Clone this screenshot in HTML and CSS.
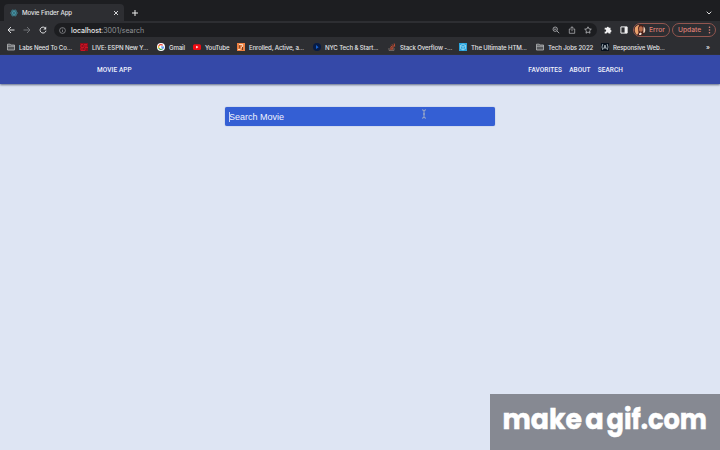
FILE: index.html
```html
<!DOCTYPE html>
<html lang="en">
<head>
<meta charset="utf-8">
<title>Movie Finder App</title>
<link rel="stylesheet" href="styles.css">
</head>
<body>
<div class="browser">
  <div class="tabs">
    <div class="tab">
      <svg class="react" viewBox="0 0 8 8"><g fill="none" stroke="#48a9bd" stroke-width=".6"><ellipse cx="4" cy="4" rx="3.5" ry="1.4"/><ellipse cx="4" cy="4" rx="3.5" ry="1.4" transform="rotate(60 4 4)"/><ellipse cx="4" cy="4" rx="3.5" ry="1.4" transform="rotate(120 4 4)"/></g><circle cx="4" cy="4" r=".8" fill="#48a9bd"/></svg>
      <span class="tab-title">Movie Finder App</span>
      <svg class="close" viewBox="0 0 6 6"><path d="M1 1l4 4M5 1L1 5" stroke="#e5e6e8" stroke-width=".9"/></svg>
    </div>
    <svg class="plus" viewBox="0 0 6 6"><path d="M3 0v6M0 3h6" stroke="#eee" stroke-width="1"/></svg>
    <svg class="chevron" viewBox="0 0 6 4"><path d="M.7.7L3 3 5.3.7" fill="none" stroke="#ddd" stroke-width="1"/></svg>
  </div>
  <div class="toolbar">
    <svg class="nav" viewBox="0 0 8 8"><path d="M7.5 4H1M4 1L1 4l3 3" fill="none" stroke="#dfe0e2"/></svg>
    <svg class="nav" viewBox="0 0 8 8"><path d="M.5 4H7M4 1l3 3-3 3" fill="none" stroke="#717377"/></svg>
    <svg class="nav" viewBox="0 0 8 8"><path d="M6.5 2.3A3 3 0 1 0 7 4.7" fill="none" stroke="#dfe0e2" stroke-width="1"/><path d="M7.2.6v3H4.3z" fill="#dfe0e2"/></svg>
    <div class="omnibox">
      <svg class="info" viewBox="0 0 7 7"><circle cx="3.5" cy="3.5" r="2.9" fill="none" stroke="#999b9f" stroke-width=".7"/><path d="M3.5 3v2M3.5 1.7v.7" stroke="#999b9f" stroke-width=".7"/></svg>
      <span class="url"><b>localhost</b>:3001/search</span>
      <svg class="tool" viewBox="0 0 8 8"><circle cx="3.2" cy="3.2" r="2.2" fill="none" stroke="#bbbdc0" stroke-width=".8"/><path d="M4.9 4.9l2.3 2.3M2.1 3.2h2.2" stroke="#bbbdc0" stroke-width=".8"/></svg>
      <svg class="tool" viewBox="0 0 8 8"><path d="M2.8 3H1.3v4.3h5.4V3H5.2M4 5.2V.8M2.5 2.2L4 .7l1.5 1.5" fill="none" stroke="#bbbdc0" stroke-width=".7"/></svg>
      <svg class="tool" viewBox="0 0 8 8"><path d="M4 .8l1 2.1 2.3.3-1.7 1.6.4 2.4-2-1.2-2 1.2.4-2.4L.7 3.2 3 2.9z" fill="none" stroke="#d0d1d4" stroke-width=".7"/></svg>
    </div>
    <svg class="puzzle" viewBox="0 0 8 8"><path d="M.7 1.8H2.8a1 1 0 1 1 2 0h1.7V4a1 1 0 1 1 0 2v1.6H4.6a1 1 0 1 0-2 0H.7V5.5a1 1 0 1 0 0-1.8z" fill="#f1f1f2"/></svg>
    <svg class="panel" viewBox="0 0 8 8"><path d="M.9.9h6.2v6.2H.9z" fill="none" stroke="#f1f1f2" stroke-width="1"/><path d="M4.6 1h2.6v6H4.6z" fill="#f1f1f2"/></svg>
    <div class="pill error">
      <svg class="avatar" viewBox="0 0 12 12"><circle cx="6" cy="6" r="5.6" fill="#4b2019"/><path d="M1.2 3.2Q3 .7 5.2.7L4 4l.5 5-1.5 2Q-.5 7.5 1.2 3.2" fill="#eba16c"/><ellipse cx="6.8" cy="5" rx="2" ry="2.8" fill="#b46b4b"/><path d="M9.6 2.3Q12.3 5.2 10.6 8.6L9.3 9z" fill="#f0d4bf"/><path d="M5.3 9.2l1.5-.7 1 1.2-1 1.2H5z" fill="#eee2d8"/></svg>
      <span>Error</span>
    </div>
    <div class="pill update"><span>Update</span><svg viewBox="0 0 3 8"><g fill="#e1857b"><circle cx="1.5" cy="1.2" r=".8"/><circle cx="1.5" cy="4" r=".8"/><circle cx="1.5" cy="6.8" r=".8"/></g></svg></div>
  </div>
  <div class="bookmarks">
    <div class="mark"><svg viewBox="0 0 8 8"><path d="M.5 1.2h2.7l.7.8h3.6v5H.5zM.5 3.2h7" fill="#55575b" stroke="#c4c5c7" stroke-width=".7"/></svg><span>Labs Need To Co...</span></div>
    <div class="mark"><svg viewBox="0 0 8 8"><path d="M0 0h8v8H0z" fill="#8c0e1c"/><path d="M1 1.5h2m1 0h3M0 3h2m1 0h4M1 4.5h3m1 0h3M0 6h3m1 0h2M1 7.5h4" stroke="#dc1627" stroke-width=".8"/></svg><span>LIVE: ESPN New Y...</span></div>
    <div class="mark"><svg viewBox="0 0 8 8"><circle cx="4" cy="4" r="4" fill="#fff"/><g fill="none" stroke-width="1.2"><path d="M5.7 2.3A2.4 2.4 0 0 0 1.8 3" stroke="#e64235"/><path d="M1.8 3a2.4 2.4 0 0 0 0 2" stroke="#f4b81c"/><path d="M1.8 5a2.4 2.4 0 0 0 3.7.9" stroke="#34a853"/><path d="M5.5 5.9A2.4 2.4 0 0 0 6.3 4H4" stroke="#4285f4"/></g></svg><span>Gmail</span></div>
    <div class="mark"><svg viewBox="0 0 8 8"><rect y="1.2" width="8" height="5.8" rx="1.5" fill="#f10b13"/><path d="M3.2 2.8v2.6l2.2-1.3z" fill="#fff"/></svg><span>YouTube</span></div>
    <div class="mark"><svg viewBox="0 0 8 8"><path d="M0 0h8v8H0z" fill="#ed8142"/><path d="M2 1.5h3.6v2L4 4.5v1M1 6.5h2.5" fill="none" stroke="#fff0dc" stroke-width=".8"/><path d="M2.7 2.3v3M5.5 4v3" stroke="#693419" stroke-width=".9"/></svg><span>Enrolled, Active, a...</span></div>
    <div class="mark"><svg viewBox="0 0 8 8"><circle cx="4" cy="4" r="4" fill="#071b44"/><path d="M3 2v4l2.6-1.8z" fill="#1763cf"/></svg><span>NYC Tech &amp; Start...</span></div>
    <div class="mark"><svg viewBox="0 0 8 8"><path d="M1 5v2.4h5V5" fill="none" stroke="#92837b" stroke-width=".7"/><path d="M2 6.1h3M2.1 4.7l3 .6M2.7 3l2.8 1.5M4.1 1.4l1.9 2.4M6.2.5l.5 3" stroke="#e95632" stroke-width=".8"/></svg><span>Stack Overflow -...</span></div>
    <div class="mark"><svg viewBox="0 0 8 8"><path d="M0 0h8v8H0z" fill="#29a3dc"/><path d="M4 1l2.5 1.5v3L4 7 1.5 5.5v-3zM1.5 2.5L4 4l2.5-1.5M4 4v3" fill="none" stroke="#bce8f6" stroke-width=".6"/></svg><span>The Ultimate HTM...</span></div>
    <div class="mark"><svg viewBox="0 0 8 8"><path d="M.5 1.2h2.7l.7.8h3.6v5H.5zM.5 3.2h7" fill="#55575b" stroke="#c4c5c7" stroke-width=".7"/></svg><span>Tech Jobs 2022</span></div>
    <div class="mark"><svg viewBox="0 0 8 8"><path d="M0 0h8v8H0z" fill="#07111d"/><path d="M1.8 1Q.2 4 1.8 7M6.2 1Q7.8 4 6.2 7M2.6 6L4 2l1.4 4M3 4.8h2" fill="none" stroke="#d1dce2" stroke-width=".7"/></svg><span>Responsive Web...</span></div>
    <span class="more">»</span>
  </div>
</div>
<header class="app-bar">
  <a class="brand">MOVIE APP</a>
  <nav class="links"><a>FAVORITES</a><a>ABOUT</a><a>SEARCH</a></nav>
</header>
<main class="page">
  <div class="search"><span class="placeholder">Search Movie</span><i class="caret"></i>
    <svg class="cursor" viewBox="0 0 6 10"><path d="M1 .8q2 0 2 1.4v5.6q0 1.4-2 1.4M5 .8q-2 0-2 1.4M5 9.2q-2 0-2-1.4M2 5h2" fill="none" stroke="#a9b3c5" stroke-width=".9"/></svg>
  </div>
</main>
<div class="watermark"><svg viewBox="0 0 230 56"><g class="wm"><text x="12.5" y="35.3" textLength="79.5" lengthAdjust="spacingAndGlyphs">make</text><text x="95.2" y="35.3" textLength="18.5" lengthAdjust="spacingAndGlyphs">a</text><text x="116.5" y="35.3" textLength="100.5" lengthAdjust="spacingAndGlyphs">gif.com</text></g></svg></div>
</body>
</html>
```
FILE: styles.css
```css
* { box-sizing: border-box; }
body { margin: 0; width: 720px; height: 450px; overflow: hidden; background: #dee5f3; font-family: Inter, "Liberation Sans", sans-serif; }
svg { display: block; flex: none; overflow: visible; }
.browser { height: 55px; background: #2d2e32; color: #e2e3e5; }
.tabs { display: flex; align-items: center; height: 21px; padding: 4px 8px 0 4px; background: #1d1e21; }
.tab { display: flex; align-items: center; width: 120px; height: 17px; padding: 0 5px 0 6px; border-radius: 4px 4px 0 0; background: #2d2e32; }
.react { width: 8px; height: 8px; }
.tab-title { margin-left: 4px; font-size: 6.2px; font-weight: 500; letter-spacing: -.13px; white-space: nowrap; }
.close { width: 6px; height: 6px; margin-left: auto; }
.plus { width: 6px; height: 6px; margin-left: 8px; }
.chevron { width: 6px; height: 4px; margin-left: auto; }
.toolbar { display: flex; align-items: center; height: 18px; padding: 0 4px 0 7px; }
.nav { width: 8px; height: 8px; margin-right: 8px; }
.omnibox { display: flex; align-items: center; width: 543px; height: 14px; margin-left: -1px; padding: 0 5px; border-radius: 7px; background: #1c1d20; }
.info { width: 7px; height: 7px; margin-right: 5px; }
.url { margin-right: auto; color: #919397; font-size: 7.1px; letter-spacing: -.06px; white-space: nowrap; }
.url b { color: #e5e6e7; font-weight: 500; }
.tool { width: 8px; height: 8px; margin-left: 8px; }
.puzzle { width: 8px; height: 8px; margin-left: 7px; }
.panel { width: 8px; height: 8px; margin-left: 8px; }
.pill { display: flex; align-items: center; height: 14px; border: 1px solid #93564f; border-radius: 7px; color: #df8076; font-size: 6.7px; font-weight: 500; }
.error { width: 37px; margin-left: 5px; gap: 3px; }
.avatar { width: 12px; height: 12px; }
.update { width: 44px; margin-left: 2px; padding: 0 4px 0 5px; justify-content: space-between; }
.update svg { width: 3px; height: 8px; }
.bookmarks { display: grid; grid-template-columns: 73px 77px 36px 44px 76px 75px 71px 77px 65px 105px auto; align-items: center; height: 16px; padding-left: 7px; font-size: 6.1px; font-weight: 500; letter-spacing: -.13px; }
.mark { display: flex; align-items: center; gap: 4px; white-space: nowrap; }
.mark svg { width: 8px; height: 8px; }
.more { font-size: 6.5px; }
.app-bar { display: flex; align-items: center; justify-content: space-between; height: 29px; padding: 0 97px; background: #3549a8; box-shadow: 0 1px 2px #626b84; color: #f1f3fc; font: 500 6.5px Roboto, sans-serif; letter-spacing: .08px; }
.links { display: flex; gap: 7px; }
.page { display: flex; justify-content: center; padding-top: 23px; }
.search { position: relative; display: flex; align-items: center; width: 270px; height: 19px; padding: 0 0 0 4px; border-radius: 2px; background: #345fd4; box-shadow: 0 0 1px #6078bb; color: #f1f4ff; font: 9px/18px "Liberation Sans", sans-serif; }
.caret { position: absolute; left: 4px; top: 5px; width: 1px; height: 10px; background: #c4d0f3; }
.cursor { position: absolute; left: 196px; top: 2px; width: 6px; height: 10px; }
.watermark { position: absolute; right: 0; bottom: 0; width: 230px; height: 56px; background: #868992; }
.watermark svg { width: 230px; height: 56px; }
.wm { font: 700 28px "Poppins", "Open Sans", sans-serif; fill: #fff; stroke: #fff; stroke-width: .5px; }
```
